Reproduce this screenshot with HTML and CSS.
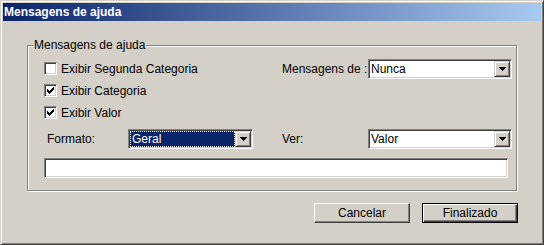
FILE: index.html
```html
<!DOCTYPE html>
<html lang="pt">
<head>
  <meta charset="UTF-8">
  <title>Mensagens de ajuda</title>
  <link rel="stylesheet" href="styles.css">
</head>
<body>
  <div class="window">
    <div class="titlebar">Mensagens de ajuda</div>

    <div class="group">
      <span class="legend">Mensagens de ajuda</span>

      <div class="top-row">
        <div class="checks">
          <label class="check"><span class="box"></span>Exibir Segunda Categoria</label>
          <label class="check"><span class="box"><svg width="7" height="7" viewBox="0 0 7 7" shape-rendering="crispEdges"><path d="M0 2h1v3h-1z M1 3h1v3h-1z M2 4h1v3h-1z M3 3h1v3h-1z M4 2h1v3h-1z M5 1h1v3h-1z M6 0h1v3h-1z"/></svg></span>Exibir Categoria</label>
          <label class="check"><span class="box"><svg width="7" height="7" viewBox="0 0 7 7" shape-rendering="crispEdges"><path d="M0 2h1v3h-1z M1 3h1v3h-1z M2 4h1v3h-1z M3 3h1v3h-1z M4 2h1v3h-1z M5 1h1v3h-1z M6 0h1v3h-1z"/></svg></span>Exibir Valor</label>
        </div>
        <div class="field">
          <span class="field-label">Mensagens de :</span>
          <div class="combo wide">
            <span class="combo-value">Nunca</span>
            <span class="combo-btn"><svg width="7" height="4" viewBox="0 0 7 4" shape-rendering="crispEdges"><path d="M0 0h7v1h-7z M1 1h5v1h-5z M2 2h3v1h-3z M3 3h1v1h-1z"/></svg></span>
          </div>
        </div>
      </div>

      <div class="mid-row">
        <div class="field left">
          <span class="field-label short">Formato:</span>
          <div class="combo narrow">
            <span class="combo-value selected"><span class="focus">Geral</span></span>
            <span class="combo-btn"><svg width="7" height="4" viewBox="0 0 7 4" shape-rendering="crispEdges"><path d="M0 0h7v1h-7z M1 1h5v1h-5z M2 2h3v1h-3z M3 3h1v1h-1z"/></svg></span>
          </div>
        </div>
        <div class="field">
          <span class="field-label">Ver:</span>
          <div class="combo wide">
            <span class="combo-value">Valor</span>
            <span class="combo-btn"><svg width="7" height="4" viewBox="0 0 7 4" shape-rendering="crispEdges"><path d="M0 0h7v1h-7z M1 1h5v1h-5z M2 2h3v1h-3z M3 3h1v1h-1z"/></svg></span>
          </div>
        </div>
      </div>

      <div class="textbox"></div>
    </div>

    <div class="buttons">
      <button class="btn">Cancelar</button>
      <button class="btn default">Finalizado</button>
    </div>
  </div>
</body>
</html>
```

FILE: styles.css
```css
body {
  margin: 0;
  font-family: "Liberation Sans", Arial, sans-serif;
  font-size: 12px;
  color: #000;
}
.window {
  width: 544px;
  height: 245px;
  box-sizing: border-box;
  background: #d4d0c8;
  border: 1px solid;
  border-color: #d4d0c8 #404040 #404040 #d4d0c8;
  box-shadow: inset 1px 1px #fff, inset -1px -1px #808080;
  padding: 2px;
}
.titlebar {
  height: 18px;
  line-height: 18px;
  padding-left: 1px;
  background: linear-gradient(to right, #0a246a, #a6caf0);
  color: #fff;
  font-weight: bold;
  font-size: 12px;
}
.group {
  position: relative;
  box-sizing: border-box;
  width: 490px;
  height: 146px;
  margin: 24px 0 0 24px;
  padding: 13px 0 0 16px;
  border: 1px solid #808080;
  box-shadow: inset 1px 1px #fff, 1px 1px #fff;
}
.legend {
  position: absolute;
  left: 5px;
  top: -8px;
  padding: 0 1px;
  background: #d4d0c8;
  line-height: 14px;
}
.top-row,
.mid-row {
  display: flex;
  align-items: flex-start;
}
.mid-row {
  margin-top: 10px;
}
.checks {
  width: 238px;
  margin-top: 3px;
  display: flex;
  flex-direction: column;
  gap: 9px;
}
.check {
  display: flex;
  align-items: center;
  height: 13px;
  white-space: nowrap;
}
.box {
  width: 13px;
  height: 13px;
  box-sizing: border-box;
  margin-right: 4px;
  background: #fff;
  border: 1px solid;
  border-color: #808080 #fff #fff #808080;
  box-shadow: inset 1px 1px #404040, inset -1px -1px #d4d0c8;
  display: flex;
  align-items: center;
  justify-content: center;
}
.field {
  display: flex;
  align-items: center;
}
.field.left {
  width: 238px;
}
.field-label {
  width: 86px;
  overflow: hidden;
  white-space: nowrap;
}
.field-label.short {
  width: 81px;
  padding-left: 3px;
}
.combo {
  height: 20px;
  box-sizing: border-box;
  display: flex;
  background: #fff;
  border: 1px solid;
  border-color: #808080 #fff #fff #808080;
  box-shadow: inset 1px 1px #404040, inset -1px -1px #d4d0c8;
  padding: 1px;
}
.combo.wide {
  width: 144px;
}
.combo.narrow {
  width: 125px;
}
.combo-value {
  flex: 1;
  line-height: 16px;
  padding-left: 1px;
  white-space: nowrap;
  overflow: hidden;
}
.combo-value.selected {
  padding: 0;
}
.focus {
  display: block;
  height: 16px;
  box-sizing: border-box;
  line-height: 14px;
  background: #0a246a;
  color: #fff;
  border: 1px dotted #fff;
  padding-left: 1px;
}
.combo-btn {
  width: 16px;
  height: 16px;
  box-sizing: border-box;
  background: #d4d0c8;
  border: 1px solid;
  border-color: #d4d0c8 #404040 #404040 #d4d0c8;
  box-shadow: inset 1px 1px #fff, inset -1px -1px #808080;
  display: flex;
  align-items: center;
  justify-content: center;
}
.textbox {
  width: 464px;
  height: 20px;
  box-sizing: border-box;
  margin-top: 9px;
  background: #fff;
  border: 1px solid;
  border-color: #808080 #fff #fff #808080;
  box-shadow: inset 1px 1px #404040, inset -1px -1px #d4d0c8;
}
.buttons {
  display: flex;
  justify-content: flex-end;
  gap: 12px;
  margin: 12px 23px 0 0;
}
.btn {
  width: 96px;
  height: 20px;
  box-sizing: border-box;
  padding: 0;
  font: inherit;
  color: #000;
  background: #d4d0c8;
  border: 1px solid;
  border-color: #fff #404040 #404040 #fff;
  box-shadow: inset -1px -1px #808080;
}
.btn.default {
  border: 1px solid #000;
  box-shadow: inset 1px 1px #fff, inset -1px -1px #404040, inset -2px -2px #808080;
}
```
